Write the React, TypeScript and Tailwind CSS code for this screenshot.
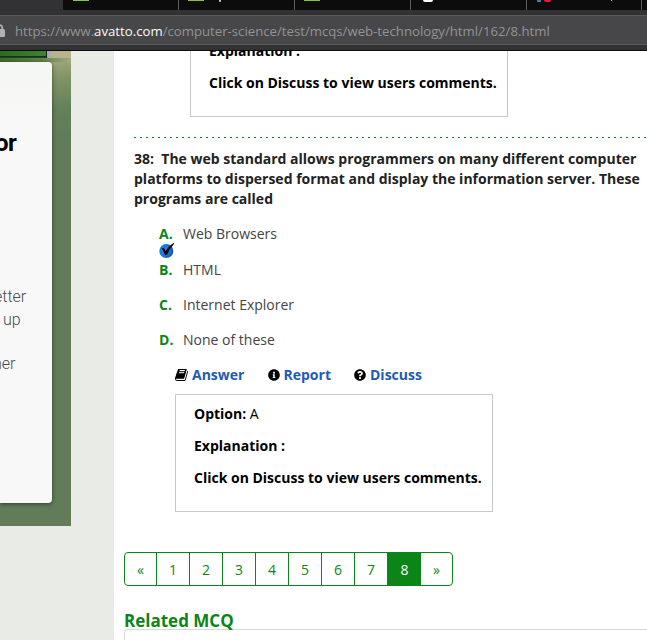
import React from "react";
import { FaInfoCircle, FaQuestionCircle } from "react-icons/fa";

function TabStrip() {
  return (
    <div className="flex h-[10px] bg-[#0c0c0d] overflow-hidden">
      <div className="w-[63px] shrink-0 bg-[#323234]" />
      <div className="w-[116px] shrink-0 border-r border-[#5b5b5d] pl-[10px]">
        <div className="h-px w-4 bg-[#83c63f]" />
      </div>
      <div className="w-[116px] shrink-0 border-r border-[#5b5b5d] pl-[9px] flex">
        <div className="h-px w-4 bg-[#83c63f]" />
        <div className="ml-[15px] h-[2px] w-[2px] bg-[#c8c8c8] rounded-b" />
      </div>
      <div className="w-[116px] shrink-0 border-r border-[#5b5b5d] pl-[9px]">
        <div className="h-px w-4 bg-[#83c63f]" />
      </div>
      <div className="w-[116px] shrink-0 border-r border-[#5b5b5d] pl-[12px] flex">
        <div className="h-[2px] w-[10px] bg-white rounded-b-full" />
      </div>
      <div className="w-[115px] shrink-0 border-r border-[#5b5b5d] pl-[10px] flex">
        <div className="h-[2px] w-[4px] bg-[#2f83ad]" />
        <div className="ml-[3px] h-[2px] w-[7px] bg-[#ed1c2e] rounded-b" />
        <div className="ml-[60px] h-px w-px bg-[#c8c8c8]" />
      </div>
    </div>
  );
}

function AddressBar() {
  return (
    <div className="h-[41px] bg-[#323234] border-b border-[#0c0c0d] pt-[5px]">
      <div className="h-[30px] bg-[#474749] border-y border-[#59595b] flex items-center">
        <svg className="w-[5px] h-[15px] shrink-0" viewBox="0 0 5 15">
          <path d="M0 6h3.5Q5 6 5 7.500v5Q5 14 3.500 14H0z" fill="#b1b1b3" />
          <path d="M-1 2Q2.300 2 2.300 5v2" fill="none" stroke="#b1b1b3" strokeWidth="1.800" />
        </svg>
        <div className="ml-[10px] pt-[2px] whitespace-nowrap text-[13.19px] leading-5 text-[#939395] font-['Open_Sans','Noto_Sans',sans-serif]">
          https://www.<span className="text-[#f9f9fa]">avatto.com</span>/computer-science/test/mcqs/web-technology/html/162/8.html
        </div>
      </div>
    </div>
  );
}

function Sidebar() {
  return (
    <aside className="w-[114px] shrink-0 bg-[#e9ebe6]">
      <div className="h-[475px] w-[71px] overflow-hidden bg-[linear-gradient(to_bottom,#a8a981_0px,#a1a77c_8px,#7e9265_28px,#62805a_60px,#627b59_90px)] font-[Roboto,sans-serif]">
        <div className="flex h-[7px]">
          <div className="w-[46px] border-b border-[#244321] bg-[linear-gradient(to_right,#2c6b23,#3b842e)] pt-[5px]">
            <div className="h-px bg-[#183216]" />
          </div>
          <div className="w-[1px] bg-[#152016]" />
          <div className="w-[4px] bg-[#aaaab0]" />
          <div className="grow bg-[#b8b58d]" />
        </div>
        <div className="h-[4px] bg-[linear-gradient(to_right,#426833,#63824d_60%,#a8aa80)]" />
        <div className="h-[441px] w-[52px] rounded-r-[4px] bg-[linear-gradient(to_bottom,#f5f7f3,#f8f8f8_60px)] shadow-[0_1px_4px_rgba(0,0,0,0.5)] flex flex-col items-start overflow-hidden whitespace-nowrap">
          <div className="mt-[67px] ml-[-5px] text-[24px] leading-[28px] font-bold tracking-[-0.5px] text-black">or</div>
          <div className="mt-[129px] ml-[-6px] text-[16px] leading-[22px] font-light text-[#4a4a4a]">
            <div>etter</div>
          </div>
          <div className="mt-[1px] ml-[3px] text-[16px] leading-[22px] font-light text-[#4a4a4a]">up</div>
          <div className="mt-[22px] ml-[-7px] text-[16px] leading-[22px] font-light text-[#4a4a4a]">her</div>
        </div>
      </div>
    </aside>
  );
}

function AnswerBox() {
  return (
    <div className="h-[118px] w-[318px] border border-[#c8c8c8] pl-[18px] pt-[9px] whitespace-nowrap text-black space-y-3">
      <p><b>Option:</b> A</p>
      <p className="font-bold">Explanation :</p>
      <p className="font-bold">Click on Discuss to view users comments.</p>
    </div>
  );
}

function CheckBadge() {
  return (
    <svg className="block h-[15px] w-[16px]" viewBox="0 0 16 15">
      <defs>
        <radialGradient id="badge" cx="35%" cy="45%" r="65%">
          <stop offset="0" stopColor="#168cf6" />
          <stop offset="0.65" stopColor="#1274e0" />
          <stop offset="1" stopColor="#174c90" />
        </radialGradient>
      </defs>
      <circle cx="7.300" cy="8" r="7" fill="url(#badge)" />
      <path d="M2.500 5.500 5 5l1.700 3.300Q9.800 2.500 14.700 0l.5.700Q10.800 5 8.300 11.500L6 12.300Q4.800 7.800 2.500 5.500z" fill="#050505" />
    </svg>
  );
}

function BookIcon() {
  return (
    <svg className="h-[12px] w-[13px] shrink-0" viewBox="0 256 1664 1408" preserveAspectRatio="none" fill="#000">
      <path d="M1639 478q40 57 18 129l-275 906q-19 64-76.500 107.500t-122.500 43.500h-923q-77 0-148.500-53.500t-99.500-131.500q-24-67-2-127 0-4 3-27t4-37q1-8-3-21.500t-3-19.500q2-11 8-21t16.500-23.500 16.500-23.500q23-38 45-91.500t30-91.500q3-10 .5-30t-.5-28q3-11 17-28t17-23q21-36 42-92t25-90q1-9-2.500-32t.5-28q4-13 22-30.500t22-22.500q19-26 42.500-84.500t27.500-96.500q1-8-3-25.500t-2-26.500q2-8 9-18t18-23 17-21q8-12 16.500-30.500t15-35 16-36 19.500-32 26.500-23.500 36-11.500 47.500 5.500l-1 3q38-9 51-9h761q74 0 114 56t18 130l-274 906q-36 119-71.500 153.500t-128.500 34.500h-869q-27 0-38 15-11 16-1 43 24 70 144 70h923q29 0 56-15.500t35-41.500l300-987q7-22 5-57 38 15 59 43zm-1064 2q-4 13 2 22.500t20 9.500h608q13 0 25.500-9.500t16.500-22.500l21-64q4-13-2-22.500t-20-9.500h-608q-13 0-25.500 9.500t-16.500 22.500zm-83 256q-4 13 2 22.500t20 9.500h608q13 0 25.500-9.500t16.500-22.500l21-64q4-13-2-22.500t-20-9.500h-608q-13 0-25.500 9.500t-16.500 22.500z" />
    </svg>
  );
}

function Option({ letter, text }: { letter: string; text: string }) {
  return (
    <div className="flex h-5">
      <b className="w-[24px] text-[#0b8514]">{letter}.</b>
      <span className="text-[#444]">{text}</span>
    </div>
  );
}

function Pagination() {
  const cell = "flex items-center justify-center border-r border-[#0b8517] pt-[2px]";
  return (
    <div className="mt-[40px] ml-[10px] flex h-[34px] w-[329px] overflow-hidden rounded-[4px] border border-[#0b8517] text-[#0b8517]">
      <div className={cell + " w-[32px]"}>«</div>
      {[1, 2, 3, 4, 5, 6, 7].map((n) => (
        <div key={n} className={cell + " w-[33px]"}>{n}</div>
      ))}
      <div className="flex w-[33px] items-center justify-center bg-[#0b8517] pt-[2px] text-white">8</div>
      <div className="flex grow items-center justify-center pt-[2px]">»</div>
    </div>
  );
}

export default function App() {
  return (
    <div className="h-[640px] w-[647px] overflow-hidden bg-white">
      <TabStrip />
      <AddressBar />
      <div className="flex h-[589px] overflow-hidden">
        <Sidebar />
        <main className="grow min-w-0 overflow-hidden text-[14px] leading-5 font-['Open_Sans','Noto_Sans',sans-serif]">
          <div className="mt-[-52px] ml-[76px]">
            <AnswerBox />
          </div>
          <div className="mt-[20px] ml-[20px] h-px bg-[repeating-linear-gradient(to_right,#0b8517_0px,#0b8517_2px,transparent_2px,transparent_6px)]" />
          <h2 className="mt-[11px] ml-[20px] whitespace-nowrap font-bold text-[#222]">
            38:&nbsp; The web standard allows programmers on many different computer
            <br />
            platforms to dispersed format and display the information server. These
            <br />
            programs are called
          </h2>
          <div className="mt-[15px] ml-[45px]">
            <Option letter="A" text="Web Browsers" />
            <div className="-mt-px">
              <CheckBadge />
            </div>
            <div className="mt-[2px] space-y-[15px]">
              <Option letter="B" text="HTML" />
              <Option letter="C" text="Internet Explorer" />
              <Option letter="D" text="None of these" />
            </div>
          </div>
          <div className="mt-[15px] ml-[61px] flex h-5 items-center font-bold text-[#1e5bb4]">
            <div className="flex w-[93px] items-center gap-[4px]">
              <BookIcon />Answer
            </div>
            <div className="flex w-[86px] items-center gap-[3.500px]">
              <FaInfoCircle className="h-3 w-3 text-black" />Report
            </div>
            <div className="flex items-center gap-[4px]">
              <FaQuestionCircle className="h-3 w-3 text-black" />Discuss
            </div>
          </div>
          <div className="mt-[9px] ml-[61px]">
            <AnswerBox />
          </div>
          <Pagination />
          <h3 className="mt-[25px] ml-[10px] h-[18px] text-[17px] leading-5 font-bold text-[#0b8517]">Related MCQ</h3>
          <div className="ml-[10px] h-10 rounded-tl-[4px] border-t border-l border-[#d8d8d8]" />
        </main>
      </div>
    </div>
  );
}
